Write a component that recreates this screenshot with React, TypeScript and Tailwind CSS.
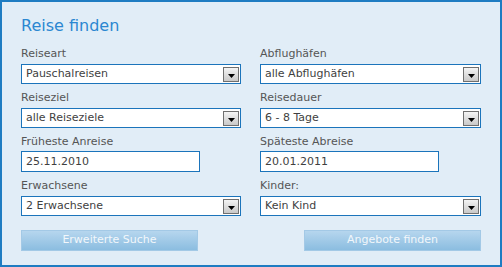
import React from "react";

const font = { fontFamily: '"DejaVu Sans", Verdana, sans-serif' };

function Arrow() {
  return (
    <div className="absolute right-[1px] top-[2px] w-[16px] h-[15px] border border-[#6f6f6f] bg-gradient-to-b from-[#f4f4f4] to-[#c9c9c9] flex items-end justify-center pb-[3px]">
      <svg width="7" height="4" viewBox="0 0 7 4">
        <polygon points="0,0 7,0 3.5,4" fill="#000" />
      </svg>
    </div>
  );
}

function Select({ label, value }: { label: string; value: string }) {
  return (
    <div className="flex flex-col">
      <div className="text-[11px] leading-[14px] text-[#555]">{label}</div>
      <div className="relative mt-[3px] h-[20px] border border-[#1b74bb] bg-white">
        <div className="pl-[4px] text-[11px] leading-[18px] text-[#3f3f3f]">{value}</div>
        <Arrow />
      </div>
    </div>
  );
}

function Input({ label, value }: { label: string; value: string }) {
  return (
    <div className="flex flex-col">
      <div className="text-[11px] leading-[14px] text-[#555]">{label}</div>
      <div className="mt-[2px] h-[21px] w-[179px] border border-[#1b74bb] bg-white">
        <div className="pl-[4px] text-[11px] leading-[19px] text-[#3f3f3f]">{value}</div>
      </div>
    </div>
  );
}

function Btn({ children }: { children: React.ReactNode }) {
  return (
    <div className="w-[177px] h-[21px] border border-[#a3c9e6] bg-gradient-to-b from-[#b6d6ee] to-[#8bbde0] flex items-center justify-center text-[11px] text-[#f2f7fb]">
      {children}
    </div>
  );
}

export default function App() {
  return (
    <div
      style={font}
      className="w-[502px] h-[267px] border-2 border-[#1e7cc2] bg-[#e1edf7] pl-[19px] pt-[14px] box-border"
    >
      <div className="text-[16px] leading-[20px] text-[#2b87d1]">Reise finden</div>
      <div className="mt-[11px] grid grid-cols-[220px_221px] gap-x-[19px] gap-y-[7px]">
        <Select label="Reiseart" value="Pauschalreisen" />
        <Select label="Abflughäfen" value="alle Abflughäfen" />
        <Select label="Reiseziel" value="alle Reiseziele" />
        <Select label="Reisedauer" value="6 - 8 Tage" />
        <Input label="Früheste Anreise" value="25.11.2010" />
        <Input label="Späteste Abreise" value="20.01.2011" />
        <Select label="Erwachsene" value="2 Erwachsene" />
        <Select label="Kinder:" value="Kein Kind" />
      </div>
      <div className="mt-[14px] flex w-[460px] justify-between">
        <Btn>Erweiterte Suche</Btn>
        <Btn>Angebote finden</Btn>
      </div>
    </div>
  );
}
